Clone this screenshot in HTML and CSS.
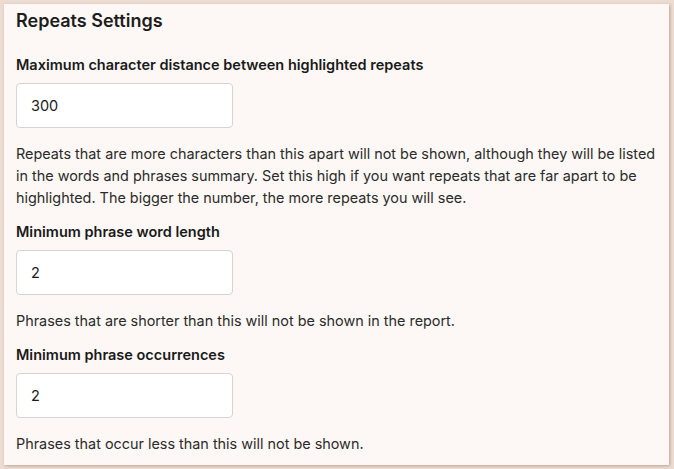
FILE: index.html
```html
<!DOCTYPE html>
<html lang="en">
<head>
  <meta charset="UTF-8" />
  <meta name="viewport" content="width=device-width, initial-scale=1.0" />
  <title>Repeats Settings</title>
  <link rel="stylesheet" href="styles.css">
</head>
<body>
  <section class="card">
    <h2>Repeats Settings</h2>

    <div class="field">
      <label for="maxDistance">Maximum character distance between highlighted repeats</label>
      <input type="text" id="maxDistance" value="300" />
      <p>Repeats that are more characters than this apart will not be shown, although they will be listed in the words and phrases summary. Set this high if you want repeats that are far apart to be highlighted. The bigger the number, the more repeats you will see.</p>
    </div>

    <div class="field">
      <label for="minLength">Minimum phrase word length</label>
      <input type="text" id="minLength" value="2" />
      <p>Phrases that are shorter than this will not be shown in the report.</p>
    </div>

    <div class="field">
      <label for="minOccur">Minimum phrase occurrences</label>
      <input type="text" id="minOccur" value="2" />
      <p>Phrases that occur less than this will not be shown.</p>
    </div>
  </section>
</body>
</html>
```

FILE: styles.css
```css
body {
  font-family: Inter, "Noto Sans", sans-serif;
  margin: 0;
  padding: 4px 5px 6px 4px;
  background: #eddcd2;
  color: #222;
}
.card {
  background: #fdf8f6;
  padding: 4px 2px 10px 12px;
  box-shadow: 1px 1px 3px rgba(90, 60, 50, 0.35);
  display: flex;
  flex-direction: column;
  gap: 12px;
}
.card h2 {
  font-size: 18px;
  font-weight: 600;
  line-height: 26px;
  margin: 0 0 8px 0;
  color: #1d1d1d;
}
.field {
  display: flex;
  flex-direction: column;
  align-items: flex-start;
}
.field label {
  font-size: 14.5px;
  font-weight: 600;
  line-height: 22px;
  color: #1a1a1a;
  margin-bottom: 7px;
}
.field input {
  width: 217px;
  height: 45px;
  box-sizing: border-box;
  border: 1px solid #d6d3d1;
  border-radius: 4px;
  background: #fff;
  padding: 0 14px;
  font-family: inherit;
  font-size: 14.5px;
  color: #1a1a1a;
}
.field p {
  font-size: 14.4px;
  line-height: 22px;
  margin: 15px 0 0 0;
  color: #2b2b2b;
}
```
